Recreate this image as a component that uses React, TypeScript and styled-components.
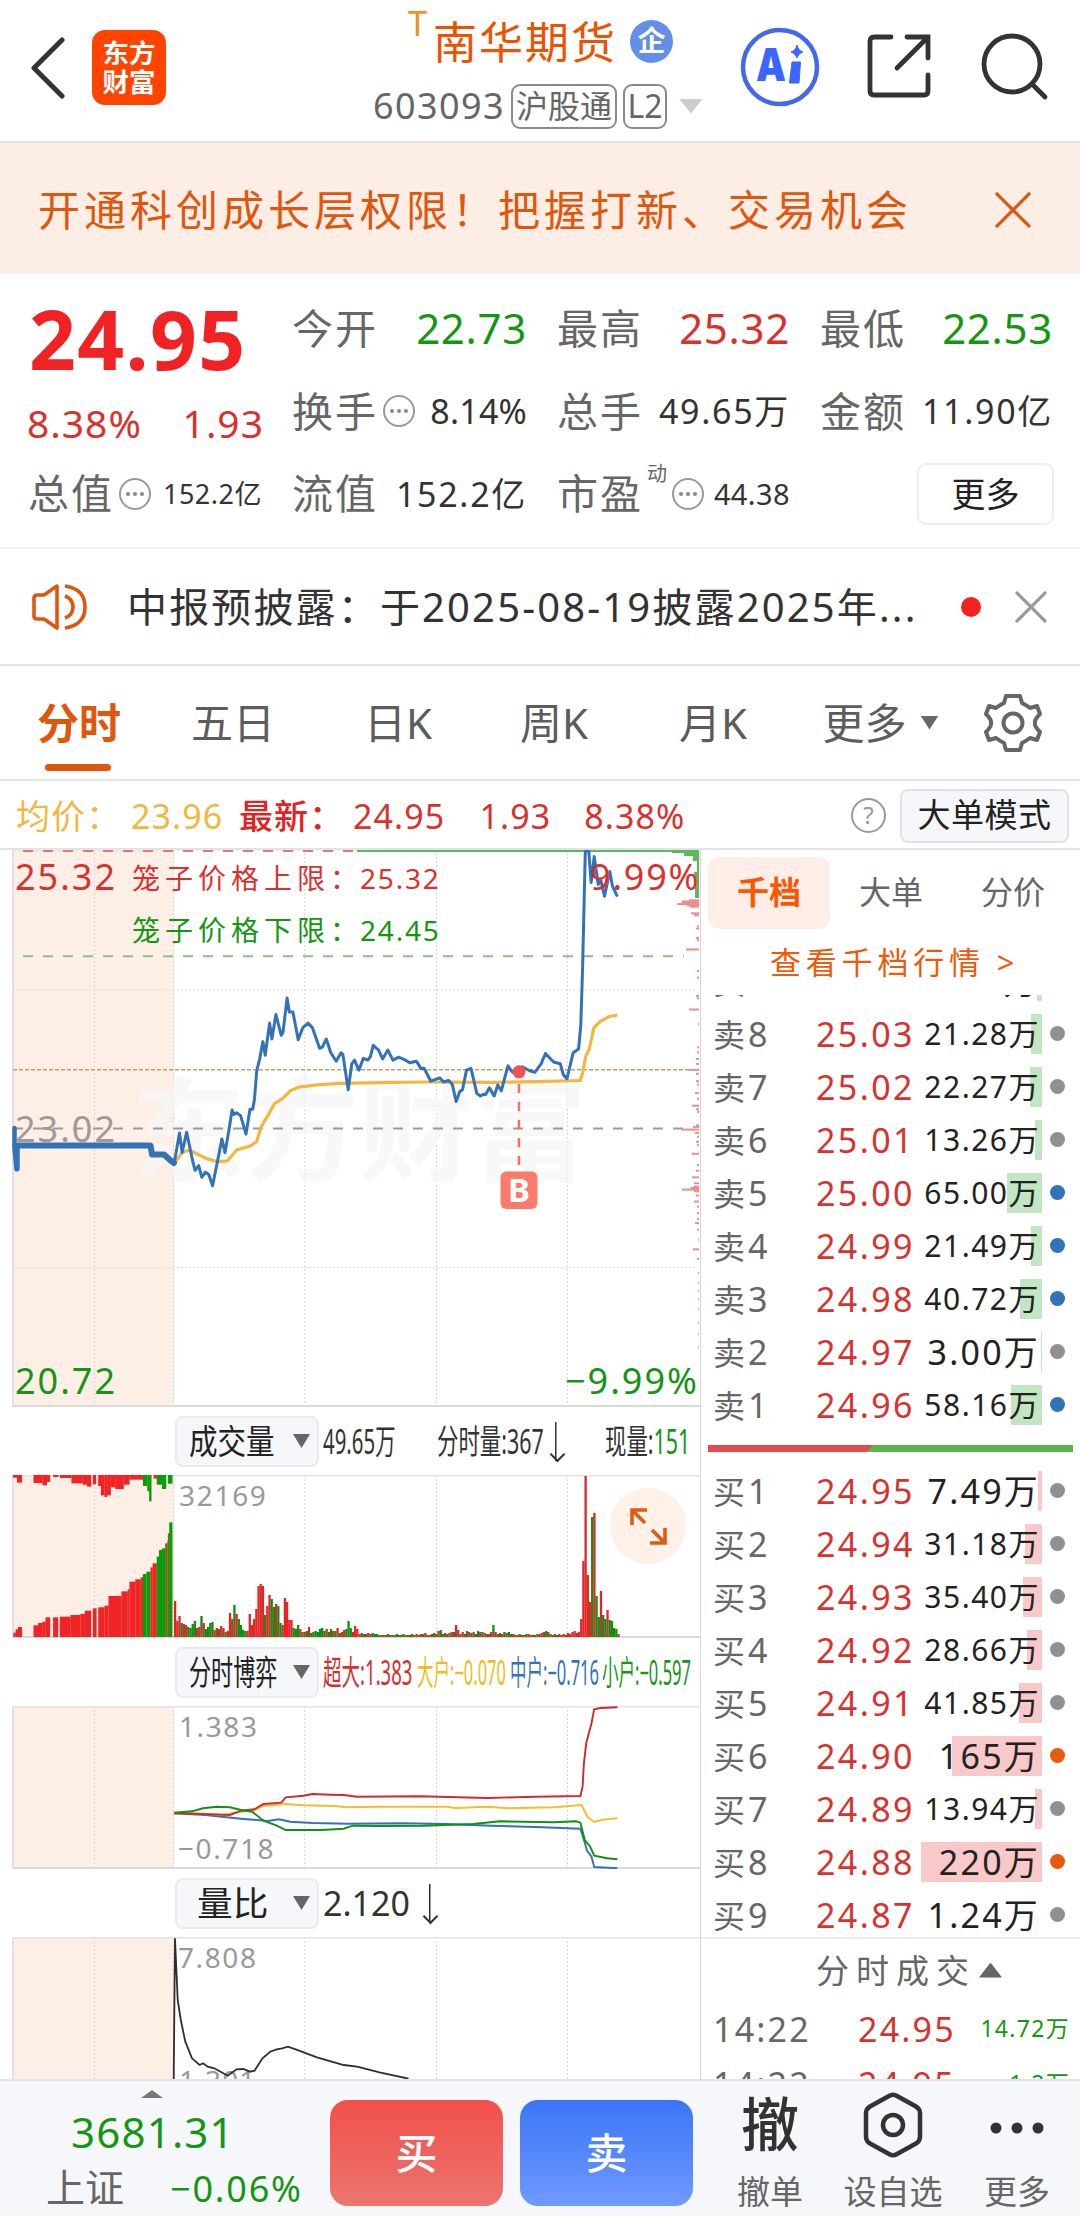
import styled, { createGlobalStyle, css } from "styled-components";

const RED = "#d8322f";
const GREEN = "#149614";
const ORANGE = "#e0560d";
const BLUE = "#3272b9";
const YELLOW = "#f0b840";

const SANS = `"Noto Sans", "Noto Sans CJK SC", sans-serif`;

type Point = [number, number];

/* ---------- data ---------- */

type Quote = {
  label: string;
  value: string;
  color?: string;
  size?: number;
  spacing?: number;
  hint?: boolean;
  sup?: string;
};

const quotes: Quote[] = [
  { label: "今开", value: "22.73", color: GREEN, size: 42, spacing: 0.7 },
  { label: "最高", value: "25.32", color: RED, size: 42, spacing: 0.7 },
  { label: "最低", value: "22.53", color: GREEN, size: 42, spacing: 0.7 },
  { label: "换手", value: "8.14%", hint: true, spacing: 0.2 },
  { label: "总手", value: "49.65万", spacing: 1.7 },
  { label: "金额", value: "11.90亿", spacing: 1.7 },
];

const quotesBottom: Quote[] = [
  { label: "总值", value: "152.2亿", hint: true, size: 27, spacing: 0.5 },
  { label: "流值", value: "152.2亿", spacing: 1.7 },
  { label: "市盈", value: "44.38", hint: true, sup: "动", size: 29, spacing: 0.4 },
];

const periods = [
  { name: "分时", width: 158, active: true },
  { name: "五日", width: 150 },
  { name: "日K", width: 180 },
  { name: "周K", width: 132 },
  { name: "月K", width: 186 },
];

type Level = {
  price: string;
  volume: string;
  bar: number;
  dot?: string;
};

const BIG = "#e85a0c";

const sells: Level[] = [
  { price: "25.04", volume: "9.95万", bar: 5 },
  { price: "25.03", volume: "21.28万", bar: 11 },
  { price: "25.02", volume: "22.27万", bar: 12 },
  { price: "25.01", volume: "13.26万", bar: 7 },
  { price: "25.00", volume: "65.00万", bar: 35, dot: BLUE },
  { price: "24.99", volume: "21.49万", bar: 11, dot: BLUE },
  { price: "24.98", volume: "40.72万", bar: 22, dot: BLUE },
  { price: "24.97", volume: "3.00万", bar: 1 },
  { price: "24.96", volume: "58.16万", bar: 31, dot: BLUE },
];

const buys: Level[] = [
  { price: "24.95", volume: "7.49万", bar: 4 },
  { price: "24.94", volume: "31.18万", bar: 17 },
  { price: "24.93", volume: "35.40万", bar: 19 },
  { price: "24.92", volume: "28.66万", bar: 15 },
  { price: "24.91", volume: "41.85万", bar: 23 },
  { price: "24.90", volume: "165万", bar: 90, dot: BIG },
  { price: "24.89", volume: "13.94万", bar: 7 },
  { price: "24.88", volume: "220万", bar: 121, dot: BIG },
  { price: "24.87", volume: "1.24万", bar: 0 },
];

// Series are kept in sample units and scaled when drawn.
const priceLine: Point[] = [
  [390, 875], [402, 792], [408, 845], [418, 790], [432, 870], [437, 893],
  [445, 880], [452, 912], [460, 898], [468, 905], [476, 935], [487, 870],
  [497, 808], [504, 845], [512, 790], [520, 730], [524, 742], [530, 737],
  [539, 745], [551, 795], [560, 728], [566, 728], [570, 700], [575, 625],
  [582, 590], [589, 545], [594, 582], [604, 495], [609, 538], [618, 472],
  [630, 528], [634, 520], [643, 427], [648, 465], [656, 465], [668, 540],
  [678, 508], [690, 495], [700, 508], [716, 563], [722, 560], [731, 538],
  [741, 575], [753, 598], [764, 575], [768, 580], [780, 675], [788, 605],
  [794, 595], [804, 622], [814, 590], [824, 595], [830, 585], [836, 555],
  [848, 568], [857, 592], [869, 568], [880, 595], [893, 587], [905, 593],
  [918, 602], [933, 598], [943, 618], [950, 617], [965, 652], [985, 643],
  [994, 654], [1005, 650], [1013, 660], [1022, 707], [1030, 680],
  [1036, 675], [1045, 622], [1055, 617], [1068, 685], [1076, 692],
  [1083, 687], [1088, 688], [1096, 670], [1107, 692], [1115, 662],
  [1123, 678], [1138, 610], [1146, 625], [1158, 635], [1170, 613],
  [1185, 623], [1198, 628], [1212, 605], [1222, 577], [1240, 600],
  [1255, 605], [1262, 635], [1270, 645], [1284, 575], [1296, 565],
  [1301, 500], [1305, 345], [1311, 30], [1319, 30], [1324, 115],
  [1331, 45], [1340, 120], [1346, 110], [1354, 152], [1366, 85],
  [1372, 125], [1383, 153],
];

const averageLine: Point[] = [
  [390, 875], [408, 845], [424, 838], [440, 848], [465, 862], [487, 870],
  [510, 867], [530, 838], [560, 828], [575, 815], [585, 775], [600, 745],
  [615, 712], [632, 700], [650, 678], [670, 668], [710, 662], [760, 658],
  [850, 656], [950, 654], [1100, 655], [1200, 653], [1300, 650],
  [1305, 630], [1312, 585], [1320, 565], [1330, 508], [1345, 490],
  [1365, 477], [1383, 473],
];

const flows: { color: string; points: Point[] }[] = [
  {
    color: BLUE,
    points: [
      [390, 400], [460, 405], [540, 416], [600, 423], [625, 418], [650, 425],
      [700, 429], [780, 431], [900, 430], [1000, 432], [1100, 437],
      [1200, 441], [1300, 446], [1308, 480], [1315, 512], [1325, 530],
      [1331, 561], [1383, 565],
    ],
  },
  {
    color: "#eec02c",
    points: [
      [390, 400], [430, 400], [500, 404], [540, 395], [570, 390], [590, 378],
      [640, 372], [680, 376], [750, 378], [775, 382], [850, 380], [1000, 380],
      [1020, 384], [1090, 380], [1140, 385], [1240, 382], [1303, 375],
      [1315, 410], [1331, 426], [1350, 419], [1383, 415],
    ],
  },
  {
    color: "#cf2b2b",
    points: [
      [390, 400], [450, 402], [515, 405], [540, 392], [570, 388], [590, 372],
      [630, 368], [640, 352], [680, 347], [700, 342], [740, 344], [770, 345],
      [800, 350], [940, 349], [1090, 354], [1200, 350], [1300, 348],
      [1305, 320], [1308, 250], [1313, 190], [1325, 130], [1331, 88],
      [1345, 84], [1383, 82],
    ],
  },
  {
    color: "#119011",
    points: [
      [390, 398], [430, 394], [455, 385], [485, 380], [515, 382], [540, 390],
      [565, 395], [590, 422], [620, 437], [640, 450], [720, 450], [770, 446],
      [790, 437], [850, 438], [950, 437], [1060, 432], [1120, 424],
      [1240, 427], [1290, 424], [1300, 428], [1310, 480], [1322, 500],
      [1331, 527], [1360, 535], [1383, 538],
    ],
  },
];

const ratioLine: Point[] = [
  [389, 1200], [392, 775], [398, 960], [405, 1020], [415, 1085], [430, 1135],
  [447, 1155], [455, 1150], [465, 1160], [480, 1165], [510, 1187],
  [530, 1168], [545, 1167], [560, 1175], [570, 1172], [588, 1135],
  [605, 1115], [620, 1108], [632, 1105], [645, 1100], [670, 1112],
  [710, 1132], [770, 1155], [800, 1160], [850, 1177], [915, 1196],
];

// Call auction: [from, to, top, colour]
const auctionUp: [number, number, number, string][] = [
  [30, 35, 698, "r"], [35, 40, 688, "r"], [40, 49, 681, "r"],
  [75, 85, 676, "r"], [85, 95, 669, "r"], [95, 102, 665, "r"],
  [102, 112, 652, "r"], [119, 130, 652, "r"], [134, 158, 650, "r"],
  [158, 180, 645, "r"], [180, 190, 642, "r"], [190, 204, 632, "r"],
  [208, 216, 625, "r"], [220, 234, 622, "r"], [234, 243, 617, "r"],
  [243, 272, 588, "r"], [272, 286, 574, "r"], [286, 290, 568, "r"],
  [290, 303, 545, "r"], [303, 315, 538, "r"], [315, 320, 532, "r"],
  [320, 328, 522, "g"], [328, 337, 515, "g"], [337, 342, 502, "r"],
  [342, 351, 490, "r"], [351, 356, 470, "g"], [356, 363, 450, "g"],
  [363, 370, 445, "g"], [370, 375, 430, "m"], [375, 379, 422, "m"],
  [376, 380, 400, "m"], [379, 386, 367, "g"],
];

const auctionDown: [number, number, number, string][] = [
  [29, 38, 233, "r"], [38, 49, 248, "r"], [75, 95, 249, "r"],
  [95, 105, 256, "r"], [105, 112, 246, "r"], [119, 131, 231, "r"],
  [134, 160, 234, "r"], [160, 185, 250, "r"], [185, 195, 254, "r"],
  [195, 204, 260, "r"], [208, 215, 253, "r"], [220, 226, 258, "r"],
  [226, 234, 286, "r"], [234, 240, 291, "r"], [240, 248, 286, "r"],
  [248, 258, 262, "r"], [258, 277, 267, "r"], [277, 290, 254, "r"],
  [290, 320, 239, "r"], [320, 330, 258, "g"], [330, 334, 274, "g"],
  [334, 339, 304, "g"], [344, 351, 236, "r"], [351, 363, 254, "g"],
  [363, 372, 267, "g"], [376, 386, 251, "g"],
];

// Minute volumes, negative when the price fell in that minute.
const volumes = [
  36, 16, 21, -14, 13, 12, -10, -9, -13, -16, 9, 10, -21, 14, -8, -10, -14,
  -15, 7, 9, -8, 11, 9, -5, 6, 24, 18, -32, 23, -18, -12, -7, -6, 6, 23, 12,
  18, 28, 51, 53, 51, -22, 31, 42, -38, -30, 33, -31, -14, 12, 39, 35, 17, 17,
  -9, -8, -12, 8, -5, 5, -6, 10, -4, -5, -6, -5, -8, -9, -6, 8, -5, -8, 6, -6,
  9, -4, 5, 7, -8, -16, -9, 5, 11, 8, 3, -4, 3, -3, 4, 3, -4, -3, -3, 2, -2,
  2, -2, 3, -2, -2, 2, -3, 2, -2, -3, -2, 2, -2, -3, 2, 3, -2, 3, -3, 4, -2,
  2, -3, 4, -3, 6, -7, -3, 4, -3, 4, 5, -5, 12, 7, -3, 5, 3, -6, 5, -4, 5, -3,
  -6, 5, -5, 4, -3, 3, 5, -12, 5, 3, -4, 3, -5, 4, -5, -3, 3, 2, -2, 3, -2, 2,
  -3, 3, 2, -2, -2, 3, -3, 4, 5, -6, -5, 3, -2, 3, -2, 3, -2, 3, 2, 4, 3, 5,
  6, 4, 5, 18, 76, 161, 62, 35, -120, 124, -41, -20, 46, -22, -18, 27, -17,
  -16, -9, -8, 3,
];

// Price distribution along the right axis: [y, length]
const spread: Point[] = [
  [167, 10], [170, 17], [174, 17], [178, 22], [182, 12], [186, 9], [206, 8],
  [212, 5], [245, 2], [252, 3], [280, 3], [287, 2], [315, 13], [380, 2],
  [400, 2], [455, 3], [462, 2], [496, 10], [540, 1], [610, 2], [625, 2],
  [645, 3], [660, 3], [678, 10], [690, 3], [712, 3], [722, 2], [748, 4],
  [765, 2], [786, 7], [797, 3], [805, 2], [845, 3], [850, 6], [858, 18],
  [868, 4], [880, 2], [895, 3], [905, 2], [931, 7], [965, 2], [982, 3],
  [1002, 7], [1020, 5], [1030, 5], [1034, 8], [1039, 17], [1044, 5],
  [1057, 3], [1075, 5], [1090, 2], [1110, 2], [1128, 2], [1140, 4],
  [1160, 2], [1190, 1], [1219, 6], [1248, 2], [1290, 1], [1320, 1],
  [1345, 1], [1370, 1], [1400, 1], [1440, 1], [1475, 1], [1515, 1],
];

const toPoints = (points: Point[], top: number, scale: number) =>
  points
    .map(([x, y]) => `${(x / 2.24).toFixed(1)},${(top + y / scale).toFixed(1)}`)
    .join(" ");

const barColor: Record<string, string> = {
  r: "#f02424",
  g: "#0a9c0a",
  m: "#6d6a10",
};

/* ---------- charts ---------- */

const gridX = [94.5, 173.5, 304.7, 436.5, 567.5];

function Frame({ top, bottom }: { top: number; bottom: number }) {
  return (
    <g>
      <rect x={13} y={top} width={161} height={bottom - top} fill="#fdeee6" />
      {gridX.map((x) => (
        <line key={x} x1={x} x2={x} y1={top} y2={bottom} stroke="#d6d3d2" strokeDasharray="2 2" />
      ))}
      <line x1={13} x2={13} y1={top} y2={bottom} stroke="#d9d9d9" strokeWidth={1.5} />
      <line x1={13} x2={700} y1={top + 0.8} y2={top + 0.8} stroke="#e2e2e2" strokeWidth={1.5} />
      <line x1={13} x2={700} y1={bottom - 1} y2={bottom - 1} stroke="#d9d9d9" strokeWidth={2} />
    </g>
  );
}

function PriceChart() {
  return (
    <Chart viewBox="0 850 700 557" $height={557}>
      <Frame top={849} bottom={1407} />
      <line x1={13} x2={698} y1={990} y2={990} stroke="#ddd" strokeDasharray="2 2" />
      <line x1={13} x2={698} y1={1267.5} y2={1267.5} stroke="#ddd" strokeDasharray="2 2" />
      <Watermark x={131} y={1172}>东方财富</Watermark>
      <line x1={23} x2={360} y1={851} y2={851} stroke="#e07878" strokeWidth={2} strokeDasharray="10 10" />
      <line x1={357} x2={672} y1={851} y2={851} stroke="#5fb65f" strokeWidth={2} />
      <line x1={23} x2={684} y1={956.2} y2={956.2} stroke="#86c486" strokeWidth={2} strokeDasharray="10 10" />
      <line x1={13} x2={698} y1={1069.7} y2={1069.7} stroke="#cf9a62" strokeWidth={1.6} strokeDasharray="4 2" />
      <line x1={13} x2={684} y1={1128.6} y2={1128.6} stroke="#999" strokeWidth={2} strokeDasharray="10 10" />
      <path d="M672 850H699V898H695V886H694V872H697V861H693V856H684V853H672Z" fill="#5cb85c" />
      {spread.map(([y, length]) => (
        <rect
          key={y}
          x={699 - length}
          y={844 + y / 3.015}
          width={length}
          height={2}
          fill="#ea8d8d"
        />
      ))}
      <polyline points={toPoints(averageLine, 840, 2.703)} fill="none" stroke={YELLOW} strokeWidth={3.2} />
      <ChartText x={15} y={889.5} $color={RED} $size={36} $spacing={2}>25.32</ChartText>
      <ChartText x={132} y={889} $color={RED} $size={28} $spacing={5}>笼子价格上限：</ChartText>
      <ChartText x={360} y={889} $color={RED} $size={28} $spacing={1.8}>25.32</ChartText>
      <ChartText x={132} y={941} $color={GREEN} $size={28} $spacing={5}>笼子价格下限：</ChartText>
      <ChartText x={360} y={941} $color={GREEN} $size={28} $spacing={1.8}>24.45</ChartText>
      <polyline points={toPoints(priceLine, 840, 2.703)} fill="none" stroke={BLUE} strokeWidth={3} strokeLinejoin="round" />
      <path d="M14.5 1128V1148L16.5 1169.500M17.500 1146V1169" fill="none" stroke={BLUE} strokeWidth={4.5} strokeLinecap="round" />
      <path d="M18 1145.600H150.500L152 1154.500H164L170 1160L174 1163" fill="none" stroke={BLUE} strokeWidth={6} strokeLinecap="round" strokeLinejoin="round" />
      <ChartText x={15} y={1141.5} $color="#a0999a" $size={36} $spacing={2}>23.02</ChartText>
      <ChartText x={590} y={889.5} $color={RED} $size={36} $spacing={1.8}>9.99%</ChartText>
      <ChartText x={15} y={1394} $color={GREEN} $size={36} $spacing={2}>20.72</ChartText>
      <ChartText x={565} y={1394} $color={GREEN} $size={36} $spacing={2}>−9.99%</ChartText>
      <line x1={519} x2={519} y1={1084} y2={1171} stroke="#f0706a" strokeWidth={2.6} strokeDasharray="9 9" />
      <circle cx={519} cy={1071.8} r={6.5} fill="#ee5350" />
      <rect x={500.5} y={1171.500} width={37} height={37.500} rx={6} fill="#fa7a6b" />
      <MarkText x={519} y={1202}>B</MarkText>
    </Chart>
  );
}

function VolumeChart() {
  return (
    <Chart viewBox="0 1475 700 163" $height={163}>
      <Frame top={1475} bottom={1638} />
      {auctionUp.map(([from, to, top, c]) => (
        <rect
          key={`${from}-${top}`}
          x={from / 2.24}
          y={1400 + top / 3}
          width={(to - from) / 2.24 + 0.15}
          height={(711 - top) / 3}
          fill={barColor[c]}
        />
      ))}
      {auctionDown.map(([from, to, bottom, c]) => (
        <rect
          key={from}
          x={from / 2.24}
          y={1475}
          width={(to - from) / 2.24 + 0.15}
          height={(bottom - 225) / 3}
          fill={barColor[c]}
        />
      ))}
      {volumes.map((v, i) => (
        <rect
          key={i}
          x={174 + i * 2.195}
          y={1637 - Math.abs(v)}
          width={2.3}
          height={Math.abs(v)}
          fill={v > 0 ? "#e02626" : "#128c12"}
        />
      ))}
      <ChartText x={179} y={1506} $color="#999" $size={28} $spacing={1.7}>32169</ChartText>
      <circle cx={648} cy={1526} r={38} fill="#fff0e8" />
      <path
        d="M632 1525V1510H647M632 1510L645 1523M650 1543H665V1528M665 1543L652 1530"
        fill="none"
        stroke="#dd5c12"
        strokeWidth={3.6}
      />
    </Chart>
  );
}

function FlowChart() {
  return (
    <Chart viewBox="0 1706 700 163" $height={163}>
      <Frame top={1706} bottom={1869} />
      <ChartText x={179} y={1737} $color="#999" $size={28} $spacing={1.6}>1.383</ChartText>
      <ChartText x={178} y={1859} $color="#999" $size={28} $spacing={1.6}>−0.718</ChartText>
      {flows.map((flow) => (
        <polyline
          key={flow.color}
          points={toPoints(flow.points, 1680, 3)}
          fill="none"
          stroke={flow.color}
          strokeWidth={1.9}
        />
      ))}
    </Chart>
  );
}

function RatioChart() {
  return (
    <Chart viewBox="0 1937 700 142" $height={142}>
      <Frame top={1937} bottom={2100} />
      <ChartText x={178} y={1968} $color="#999" $size={28} $spacing={1.6}>7.808</ChartText>
      <ChartText x={179} y={2091} $color="#999" $size={28}>1.301</ChartText>
      <polyline points={toPoints(ratioLine, 1680, 3)} fill="none" stroke="#2e2e2e" strokeWidth={1.8} />
    </Chart>
  );
}

/* ---------- pieces ---------- */

function QuoteCell({ label, value, color, size = 34, spacing, hint, sup }: Quote) {
  return (
    <Cell>
      <Label>{label}</Label>
      {sup && <Sup>{sup}</Sup>}
      {hint && (
        <svg width="34" height="34" viewBox="0 0 34 34">
          <circle cx="17" cy="17" r="15" fill="none" stroke="#999" strokeWidth="2" />
          <circle cx="10" cy="17" r="2" fill="#888" />
          <circle cx="17" cy="17" r="2" fill="#888" />
          <circle cx="24" cy="17" r="2" fill="#888" />
        </svg>
      )}
      <Value $color={color} $size={size} $spacing={spacing}>
        {value}
      </Value>
    </Cell>
  );
}

function BookRow({ side, rank, level }: { side: "卖" | "买"; rank: number; level: Level }) {
  return (
    <Row>
      <Rank>
        {side}
        <b>{rank}</b>
      </Rank>
      <Price>{level.price}</Price>
      <Volume $small={level.volume.length > 5}>
        <Depth style={{ width: level.bar }} $sell={side === "卖"} />
        <span>{level.volume}</span>
      </Volume>
      <Dot $color={level.dot} />
    </Row>
  );
}

function IndicatorPick({ name, scale, indent }: { name: string; scale: number; indent?: number }) {
  return (
    <Pick>
      <PickName $indent={indent}>
        <Squeeze $scale={scale}>{name}</Squeeze>
      </PickName>
      <Triangle $w={17} $h={14} $color="#666" />
    </Pick>
  );
}

export default function App() {
  return (
    <Page>
      <GlobalStyle />
      <Header>
        <Back width="36" height="64" viewBox="0 0 36 64">
          <path d="M33 4L5 32L33 60" fill="none" stroke="#333" strokeWidth="5" strokeLinecap="round" strokeLinejoin="round" />
        </Back>
        <Logo>
          东方
          <br />
          财富
        </Logo>
        <Title>
          <Name>
            <i>T</i>
            <span>南华期货</span>
            <Badge>企</Badge>
          </Name>
          <Code>
            603093
            <Tag $w={106}>沪股通</Tag>
            <Tag $w={44}>L2</Tag>
            <Triangle $w={24} $h={15} $color="#ccc" />
          </Code>
        </Title>
        <Tools>
          <svg width="80" height="80" viewBox="0 0 80 80">
            <circle cx="40" cy="40" r="37" fill="none" stroke="#4169e8" strokeWidth="4.500" />
            <AiText x="16" y="54" textLength="30" lengthAdjust="spacingAndGlyphs">A</AiText>
            <path d="M52 35H60.500L59 56H49.500Z" fill="#3a66ff" stroke="#3a66ff" strokeLinejoin="round" />
            <path d="M57 18Q58.500 24 63 25Q58.500 26 57 31Q55.500 26 51 25Q55.500 24 57 18Z" fill="#3a66ff" stroke="#3a66ff" />
          </svg>
          <svg width="68" height="68" viewBox="0 0 68 68" fill="none" stroke="#333" strokeWidth="4.800" strokeLinecap="round">
            <path d="M25 4H8Q4 4 4 8V58Q4 62 8 62H58Q62 62 62 58V42M41 4H62V25M61 5L31 35" />
          </svg>
          <svg width="70" height="70" viewBox="0 0 70 70" fill="none" stroke="#333" strokeWidth="4.800" strokeLinecap="round">
            <circle cx="33" cy="32" r="28" />
            <path d="M53 52L66 65" />
          </svg>
        </Tools>
      </Header>

      <Banner>
        <span>开通科创成长层权限！把握打新、交易机会</span>
        <svg width="36" height="36" viewBox="0 0 36 36" stroke={ORANGE} strokeWidth="3.200">
          <path d="M1 1L35 35M35 1L1 35" />
        </svg>
      </Banner>

      <Quotes>
        <Last>
          <h1>24.95</h1>
          <p>
            <span>8.38%</span>
            <span>1.93</span>
          </p>
        </Last>
        {quotes.map((q) => (
          <QuoteCell key={q.label} {...q} />
        ))}
        {quotesBottom.map((q) => (
          <QuoteCell key={q.label} {...q} />
        ))}
        <MoreButton>更多</MoreButton>
      </Quotes>

      <Notice>
        <svg width="58" height="50" viewBox="0 0 58 50" fill="none" stroke={ORANGE} strokeWidth="3.600" strokeLinejoin="round">
          <path d="M3 14Q2 14 2 16V34Q2 37 5 37H12L25 46V4L12 13H5Q2 13 2 16Z" />
          <path d="M33 14Q41 17 41 25Q41 33 33 36M33 4Q53 7 53 25Q53 43 33 46" />
        </svg>
        <p>中报预披露：于2025-08-19披露2025年...</p>
        <em />
        <svg width="32" height="32" viewBox="0 0 32 32" stroke="#999" strokeWidth="3.200">
          <path d="M1 1L31 31M31 1L1 31" />
        </svg>
      </Notice>

      <Periods>
        {periods.map((p) => (
          <Period key={p.name} $width={p.width} $active={p.active}>
            {p.name}
          </Period>
        ))}
        <Period $width={149}>
          更多
          <Triangle $w={18} $h={14} $color="#666" />
        </Period>
        <svg width="58" height="60" viewBox="-29 -30 58 60" fill="none" stroke="#666" strokeWidth="4" strokeLinejoin="round">
          <path d="M-7 -27H7L9 -20Q13 -18 17 -15L24 -17L27 -9Q21 -3 22 0Q21 3 27 9L24 17L17 15Q13 18 9 20L7 27H-7L-9 20Q-13 18 -17 15L-24 17L-27 9Q-21 3 -22 0Q-21 -3 -27 -9L-24 -17L-17 -15Q-13 -18 -9 -20Z" />
          <circle r="9.500" />
        </svg>
      </Periods>

      <Summary>
        <Avg>
          <span>均价：</span>23.96
        </Avg>
        <Now>
          <span>最新：</span>24.95
        </Now>
        <Now $left={34}>1.93</Now>
        <Now $left={33}>8.38%</Now>
        <Help>?</Help>
        <Mode>大单模式</Mode>
      </Summary>

      <Body>
        <Charts>
          <PriceChart />
          <Bar>
            <IndicatorPick name="成交量" scale={0.84} />
            <Fixed $w={114}>
              <Squeeze $scale={0.6}>49.65万</Squeeze>
            </Fixed>
            <Fixed $w={168}>
              <Squeeze $scale={0.63}>分时量:367</Squeeze>
              <Down />
            </Fixed>
            <Fixed $w={92}>
              <Squeeze $scale={0.63}>
                现量:<u>151</u>
              </Squeeze>
            </Fixed>
          </Bar>
          <VolumeChart />
          <Bar>
            <IndicatorPick name="分时博弈" scale={0.65} />
            <Fixed $w={94} $color="#d62f2f">
              <Squeeze $scale={0.545}>超大:1.383</Squeeze>
            </Fixed>
            <Fixed $w={93} $color="#eebc20">
              <Squeeze $scale={0.485}>大户:−0.070</Squeeze>
            </Fixed>
            <Fixed $w={92} $color={BLUE}>
              <Squeeze $scale={0.485}>中户:−0.716</Squeeze>
            </Fixed>
            <Fixed $w={92} $color={GREEN}>
              <Squeeze $scale={0.485}>小户:−0.597</Squeeze>
            </Fixed>
          </Bar>
          <FlowChart />
          <Bar>
            <IndicatorPick name="量比" scale={1.05} indent={20} />
            <Fixed $w={130}>
              <span>2.120</span>
              <Down />
            </Fixed>
          </Bar>
          <RatioChart />
        </Charts>

        <Side>
          <SideTabs>
            <SideTab $active>千档</SideTab>
            <SideTab>大单</SideTab>
            <SideTab>分价</SideTab>
          </SideTabs>
          <Link>
            查看千档行情<span>&gt;</span>
          </Link>
          <SellList>
            {sells.map((level, i) => (
              <BookRow key={level.price} side="卖" rank={9 - i} level={level} />
            ))}
          </SellList>
          <Balance />
          <BuyList>
            {buys.map((level, i) => (
              <BookRow key={level.price} side="买" rank={i + 1} level={level} />
            ))}
          </BuyList>
          <Trades>
            <TradesHead>
              分时成交
              <Triangle $w={23} $h={15} $color="#666" $up />
            </TradesHead>
            {["14.72万", "1.2万"].map((v) => (
              <Trade key={v}>
                <span>14:22</span>
                <b>24.95</b>
                <small>{v}</small>
              </Trade>
            ))}
          </Trades>
        </Side>
      </Body>

      <Footer>
        <Index>
          <Triangle $w={22} $h={8} $color="#777" $up />
          <strong>3681.31</strong>
          <p>
            上证<span>−0.06%</span>
          </p>
        </Index>
        <Order $from="#f2504a" $to="#eb756e">买</Order>
        <Order $from="#3a75f7" $to="#6f99ff">卖</Order>
        <Actions>
          <Action $w={98}>
            <Cancel>撤</Cancel>
            <span>撤单</span>
          </Action>
          <Action $w={148}>
            <svg width="60" height="66" viewBox="0 0 60 66" fill="none" stroke="#333" strokeWidth="4.500" strokeLinejoin="round">
              <path d="M26 4Q30 1.500 34 4L53 14.500Q57 17 57 21V45Q57 49 53 51.500L34 62Q30 64.500 26 62L7 51.500Q3 49 3 45V21Q3 17 7 14.500Z" />
              <circle cx="30" cy="33" r="10" />
            </svg>
            <span>设自选</span>
          </Action>
          <Action $w={100}>
            <svg width="60" height="66" viewBox="0 0 60 66" fill="#333">
              <circle cx="9" cy="36" r="5.500" />
              <circle cx="30" cy="36" r="5.500" />
              <circle cx="51" cy="36" r="5.500" />
            </svg>
            <span>更多</span>
          </Action>
        </Actions>
      </Footer>
    </Page>
  );
}

/* ---------- styles ---------- */

const GlobalStyle = createGlobalStyle`
  * {
    box-sizing: border-box;
    margin: 0;
    padding: 0;
  }
  body {
    background: #fff;
    font-family: ${SANS};
    line-height: 1;
    color: #333;
  }
  svg {
    display: block;
    flex: none;
  }
`;

const Page = styled.div`
  width: 1080px;
  height: 2216px;
  display: flex;
  flex-direction: column;
  overflow: hidden;
  white-space: nowrap;
`;

const Triangle = styled.i<{ $w: number; $h: number; $color: string; $up?: boolean }>`
  flex: none;
  width: ${(p) => p.$w}px;
  height: ${(p) => p.$h}px;
  background: ${(p) => p.$color};
  clip-path: ${(p) =>
    p.$up ? "polygon(50% 0, 100% 100%, 0 100%)" : "polygon(0 0, 100% 0, 50% 100%)"};
`;

const Header = styled.header`
  height: 143px;
  flex: none;
  display: flex;
  align-items: flex-start;
  border-bottom: 2px solid #e6e2df;
`;

const Back = styled.svg`
  margin: 36px 0 0 29px;
`;

const Logo = styled.div`
  width: 74px;
  height: 75px;
  margin: 30px 0 0 27px;
  padding-top: 9px;
  border-radius: 13px;
  background: #ff4400;
  color: #fff;
  font-size: 26.500px;
  font-weight: 700;
  line-height: 29px;
  text-align: center;
`;

const Title = styled.div`
  width: 340px;
  margin-left: 207px;
`;

const Name = styled.div`
  height: 76px;
  padding: 20px 0 0 35px;
  display: flex;
  align-items: flex-start;
  color: #ee5200;
  font-size: 44px;

  i {
    margin-top: -14px;
    width: 25px;
    font-size: 34px;
    font-style: normal;
    color: #f0901e;
  }
  span {
    letter-spacing: 2px;
  }
`;

const Badge = styled.b`
  width: 43px;
  height: 43px;
  margin-left: 13px;
  border-radius: 50%;
  background: #6390e6;
  color: #fff;
  font-size: 28px;
  line-height: 41px;
  text-align: center;
`;

const Code = styled.div`
  display: flex;
  align-items: center;
  gap: 6px;
  height: 60px;
  color: #666;
  font-size: 36px;
  letter-spacing: 1.400px;

  i {
    margin-left: 6px;
  }
`;

const Tag = styled.span<{ $w: number }>`
  width: ${(p) => p.$w}px;
  height: 45px;
  border: 2px solid #8a8a8a;
  border-radius: 9px;
  font-size: 32px;
  line-height: 40px;
  text-align: center;
  letter-spacing: 0;
`;

const Tools = styled.div`
  flex: 1;
  display: flex;
  align-items: center;
  height: 134px;
  padding-left: 27px;

  svg + svg {
    margin-left: 46px;
  }
  svg:last-child {
    margin-left: 45px;
  }
`;

const AiText = styled.text`
  font: 900 45px Inter, "Noto Sans", sans-serif;
  fill: #3a66ff;
`;

const Banner = styled.div`
  height: 131px;
  flex: none;
  display: flex;
  align-items: center;
  justify-content: space-between;
  padding: 2px 49px 0 38px;
  background: #fdeee5;
  color: ${ORANGE};
  font-size: 42px;
  letter-spacing: 4px;
`;

const Quotes = styled.section`
  height: 275px;
  flex: none;
  display: grid;
  grid-template-columns: 234px 235px 233px 233px;
  grid-template-rows: 84px 82px 83px;
  column-gap: 30px;
  padding: 12px 27px 0 28px;
  border-bottom: 2px solid #f0f0f0;
`;

const Last = styled.div`
  grid-row: span 2;
  color: ${RED};

  h1 {
    margin: 9px 0 0 1px;
    color: #f02224;
    font-size: 82px;
    line-height: 86px;
    letter-spacing: 1.400px;
  }
  p {
    display: flex;
    justify-content: space-between;
    margin: 22px -2px 0 -1px;
    font-size: 39px;
    letter-spacing: 1px;
  }
`;

const Cell = styled.div`
  display: flex;
  align-items: center;
`;

const Label = styled.span`
  margin-right: 4px;
  color: #666;
  font-size: 41px;
  letter-spacing: 2px;
`;

const Sup = styled.sup`
  width: 24px;
  margin-top: -40px;
  color: #666;
  font-size: 20px;
`;

const Value = styled.span<{ $color?: string; $size: number; $spacing?: number }>`
  margin-left: auto;
  color: ${(p) => p.$color || "#333"};
  font-size: ${(p) => p.$size}px;
  letter-spacing: ${(p) => p.$spacing || 0}px;
`;

const MoreButton = styled.button`
  width: 137px;
  height: 62px;
  margin: 11px 0 0 97px;
  border: 2px solid #eceef0;
  border-radius: 9px;
  background: #fff;
  color: #222;
  font: 34px ${SANS};
  line-height: 1;
`;

const Notice = styled.div`
  height: 117px;
  flex: none;
  display: flex;
  align-items: center;
  padding-left: 32px;
  border-bottom: 2px solid #e4e4e4;

  p {
    width: 871px;
    padding-left: 37px;
    font-size: 40px;
    letter-spacing: 2.150px;
  }
  em {
    width: 20px;
    height: 20px;
    border-radius: 50%;
    background: #f22222;
  }
  em + svg {
    margin-left: 34px;
  }
`;

const Periods = styled.nav`
  height: 115px;
  flex: none;
  display: flex;
  align-items: center;
  border-bottom: 2px solid #e4e4e4;

  svg {
    margin-left: 29px;
  }
`;

const Period = styled.div<{ $width: number; $active?: boolean }>`
  width: ${(p) => p.$width}px;
  height: 100%;
  display: flex;
  align-items: center;
  justify-content: center;
  gap: 14px;
  position: relative;
  color: #5c5c5c;
  font-size: 42px;

  ${(p) =>
    p.$active &&
    css`
      color: ${ORANGE};
      font-weight: 700;

      &::after {
        content: "";
        position: absolute;
        bottom: 8px;
        left: 45px;
        width: 66px;
        height: 7px;
        border-radius: 4px;
        background: ${ORANGE};
      }
    `}
`;

const Summary = styled.div`
  height: 69px;
  flex: none;
  display: flex;
  align-items: center;
  padding: 2px 11px 0 16px;
  border-bottom: 2px solid #e4e4e4;
  font-size: 34px;
  letter-spacing: 1.100px;
`;

const Avg = styled.div`
  width: 223px;
  color: ${YELLOW};

  span {
    display: inline-block;
    width: 115px;
  }
`;

const Now = styled.div<{ $left?: number }>`
  margin-left: ${(p) => p.$left || 0}px;
  color: ${RED};

  span {
    display: inline-block;
    width: 114px;
    color: #e52222;
    font-weight: 500;
  }
`;

const Help = styled.div`
  width: 35px;
  height: 35px;
  margin-left: auto;
  border: 2.500px solid #999;
  border-radius: 50%;
  color: #999;
  font-size: 24px;
  line-height: 30px;
  text-align: center;
  letter-spacing: 0;
`;

const Mode = styled.div`
  width: 169px;
  height: 54px;
  margin-left: 14px;
  border: 2px solid #dfe2e6;
  border-radius: 8px;
  background: #f6f7fa;
  color: #222;
  font-size: 33px;
  line-height: 48px;
  text-align: center;
  letter-spacing: 0.500px;
`;

const Body = styled.main`
  height: 1229px;
  flex: none;
  display: flex;
  overflow: hidden;
`;

const Charts = styled.section`
  width: 701px;
  border-right: 1px solid #d6d6d6;
`;

const Chart = styled.svg<{ $height: number }>`
  width: 700px;
  height: ${(p) => p.$height}px;
`;

const ChartText = styled.text<{ $color: string; $size: number; $spacing?: number }>`
  fill: ${(p) => p.$color};
  font-family: ${SANS};
  font-size: ${(p) => p.$size}px;
  letter-spacing: ${(p) => p.$spacing ?? 1.2}px;
`;

const Watermark = styled.text`
  fill: #f5f5f5;
  fill-opacity: 0.75;
  font: 700 114px ${SANS};
`;

const MarkText = styled.text`
  fill: #fff;
  font: 700 33px ${SANS};
  text-anchor: middle;
`;

const Bar = styled.div`
  height: 68px;
  display: flex;
  align-items: center;
  padding-left: 175px;
  font-size: 34px;
`;

const Pick = styled.div`
  width: 144px;
  height: 51px;
  margin-right: 4px;
  display: flex;
  align-items: center;
  border: 2px solid #e9ebee;
  border-radius: 8px;
  background: #f6f7fa;
  color: #222;
`;

const PickName = styled.div<{ $indent?: number }>`
  width: 116px;
  display: flex;
  padding-left: ${(p) => p.$indent ?? 12}px;
`;

const Squeeze = styled.span<{ $scale: number }>`
  width: 0;
  transform: scaleX(${(p) => p.$scale});
  transform-origin: 0 50%;

  u {
    color: ${GREEN};
    text-decoration: none;
  }
`;

const Fixed = styled.div<{ $w: number; $color?: string }>`
  width: ${(p) => p.$w}px;
  display: flex;
  align-items: center;
  color: ${(p) => p.$color || "#333"};

  ${Squeeze} + i {
    margin-left: 112px;
  }
`;

const Down = styled.i`
  width: 14px;
  height: 39px;
  margin-left: 13px;
  background:
    linear-gradient(#333, #333) center / 1.500px 100% no-repeat;
  position: relative;

  &::after {
    content: "";
    position: absolute;
    left: 2.500px;
    bottom: 1px;
    width: 9px;
    height: 9px;
    border: solid #333;
    border-width: 0 2px 2px 0;
    transform: rotate(45deg);
  }
`;

const Side = styled.aside`
  flex: 1;
  display: flex;
  flex-direction: column;
`;

const SideTabs = styled.div`
  flex: none;
  display: flex;
  padding: 7px 0 0 7px;
`;

const SideTab = styled.div<{ $active?: boolean }>`
  width: 122px;
  height: 72px;
  border-radius: 11px;
  color: ${(p) => (p.$active ? "#ff5500" : "#666")};
  background: ${(p) => (p.$active ? "#ffeee7" : "transparent")};
  font-size: 32px;
  font-weight: ${(p) => (p.$active ? 700 : 400)};
  line-height: 70px;
  text-align: center;
`;

const Link = styled.div`
  height: 66px;
  flex: none;
  padding: 18px 0 0 69px;
  color: #ee5a0a;
  font-size: 31px;
  letter-spacing: 4.800px;

  span {
    margin-left: 12px;
  }
`;

const SellList = styled.div`
  height: 450px;
  flex: none;
  display: flex;
  flex-direction: column;
  justify-content: flex-end;
  padding-bottom: 14px;
  overflow: hidden;
`;

const BuyList = styled.div`
  height: 485px;
  flex: none;
  padding-top: 12px;
  overflow: hidden;
`;

const Row = styled.div`
  height: 53px;
  flex: none;
  display: flex;
  align-items: center;
  padding-left: 12px;
`;

const Rank = styled.div`
  width: 103px;
  color: #666;
  font-size: 32px;

  b {
    margin-left: 3px;
    font-size: 34px;
    font-weight: 400;
  }
`;

const Price = styled.div`
  width: 101px;
  color: ${RED};
  font-size: 34px;
  letter-spacing: 2.400px;
`;

const Volume = styled.div<{ $small: boolean }>`
  width: 125px;
  height: 40px;
  display: flex;
  align-items: center;
  justify-content: flex-end;
  position: relative;
  padding-right: 2px;
  color: #222;
  font-size: ${(p) => (p.$small ? 30 : 34)}px;
  letter-spacing: ${(p) => (p.$small ? 1.5 : 2.2)}px;

  span {
    position: relative;
  }
`;

const Depth = styled.i<{ $sell: boolean }>`
  position: absolute;
  top: 0;
  right: 0;
  height: 40px;
  background: ${(p) => (p.$sell ? "#c2e6c2" : "#f9c8c8")};
`;

const Dot = styled.i<{ $color?: string }>`
  width: 15px;
  height: 15px;
  margin-left: 8px;
  border-radius: 50%;
  background: ${(p) => p.$color || "#8f8f94"};
`;

const Balance = styled.div`
  width: 365px;
  height: 7px;
  flex: none;
  margin-left: 7px;
  background: linear-gradient(135deg, #e24c4c 44.500%, #5cb548 44.500%);
`;

const Trades = styled.div`
  flex: 1;
  min-height: 0;
  overflow: hidden;
  border-top: 2px solid #ececec;
  color: #666;
`;

const TradesHead = styled.div`
  height: 62px;
  display: flex;
  align-items: center;
  padding-left: 115px;
  font-size: 33px;
  letter-spacing: 7px;

  i {
    margin-left: 3px;
  }
`;

const Trade = styled.div`
  height: 55px;
  display: flex;
  align-items: center;
  padding: 0 10px 0 12px;
  font-size: 34px;
  letter-spacing: 2.200px;

  span {
    width: 145px;
  }
  b {
    color: ${RED};
    font-weight: 400;
  }
  small {
    margin-left: auto;
    color: ${GREEN};
    font-size: 23px;
    letter-spacing: 1.300px;
  }
`;

const Footer = styled.footer`
  flex: 1;
  display: flex;
  border-top: 2px solid #e2e4e8;
  background: #f6f7fa;
`;

const Index = styled.div`
  width: 330px;
  color: ${GREEN};

  i {
    display: block;
    margin: 9px 0 0 141px;
  }
  strong {
    display: block;
    margin: 13px 0 0 71px;
    font-size: 42px;
    font-weight: 400;
    letter-spacing: 1.200px;
  }
  p {
    margin: 14px 0 0 46px;
    color: #666;
    font-size: 39px;
  }
  span {
    margin-left: 46px;
    color: ${GREEN};
    font-size: 36px;
    letter-spacing: 1.800px;
  }
`;

const Order = styled.button<{ $from: string; $to: string }>`
  width: 173px;
  height: 106px;
  margin: 19px 17px 0 0;
  border: 0;
  border-radius: 18px;
  background: linear-gradient(${(p) => p.$from}, ${(p) => p.$to});
  color: #fff;
  font: 500 42px/1 ${SANS};
`;

const Actions = styled.div`
  display: flex;
  padding-left: 11px;
`;

const Action = styled.div<{ $w: number }>`
  width: ${(p) => p.$w}px;
  display: flex;
  flex-direction: column;
  align-items: center;
  justify-content: space-between;
  padding: 11px 0 8px;
  color: #666;
  font-size: 33px;
`;

const Cancel = styled.b`
  padding-top: 3px;
  color: #333;
  font-size: 58px;
  font-weight: 500;
`;
